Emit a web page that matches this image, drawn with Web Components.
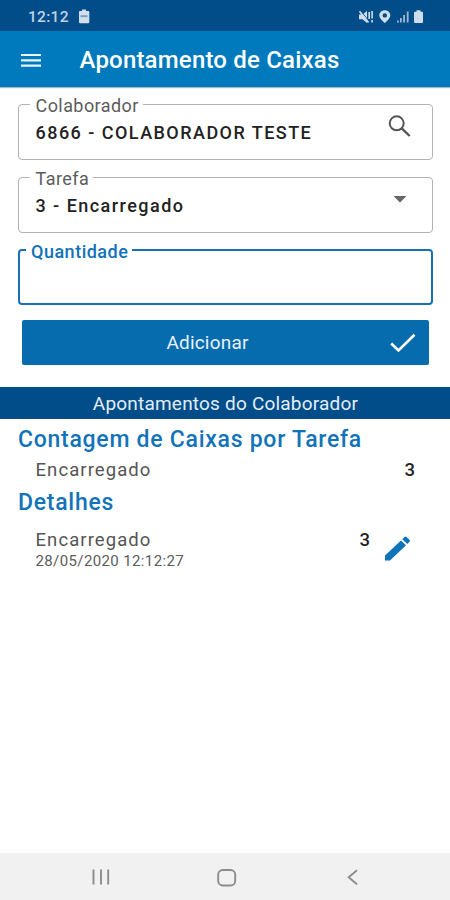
<!DOCTYPE html>
<html lang="pt-BR">
<head>
<meta charset="utf-8">
<title>Apontamento de Caixas</title>
<style>
html,body{margin:0;height:100%;background:#fff;font-family:Roboto,sans-serif}
</style>
</head>
<body>
<app-screen></app-screen>
<script>
const define=(name,html)=>customElements.define(name,class extends HTMLElement{
  constructor(){super();this.attachShadow({mode:'open'}).innerHTML=html;}
});

define('status-bar',`<style>
:host{display:flex;box-sizing:border-box;height:31px;padding:2px 26px 0 28px;background:#004d8a;align-items:center}
span{font-size:15.500px;font-weight:500;line-height:18px;letter-spacing:.3px;color:#bfd2e6}
svg{display:block;flex:none}.b{margin-left:9px}.r{margin-left:auto}
</style><span>12:12</span>
<svg class="b" width="12" height="15" viewBox="0 0 12 15"><path d="M4 .5h4V2h2.500q.8 0 .8.800V13q0 1.200-1.200 1.200H2.200Q1 14.200 1 13V2.800Q1 2 1.800 2H4z" fill="#d3dfed"/><path d="M2.500 6.200h7v2h-7z" fill="#7f9fc0"/></svg>
<svg class="r" width="66" height="16" viewBox="0 0 66 16" fill="#cfdcea"><path d="M1 5.500h3.500L9 2v12l-4.500-3.700H1z"/><path d="M2.800 1.800 11 12.500" stroke="#004d8a" stroke-width="1"/><path d="M1.500 2.200l9 11.300M11.200 3v7" stroke="#cfdcea" stroke-width="1.700" fill="none"/><path d="M14.100 2v7.500m0 1.500v2.500" stroke="#cfdcea" stroke-width="1.600"/><path fill-rule="evenodd" d="M26.800 1.200c-3 0-5.500 2.200-5.500 5.200 0 3.200 5.500 7.600 5.500 7.600s5.500-4.400 5.500-7.600c0-3-2.500-5.200-5.500-5.200zm0 3a2.200 2.200 0 1 1 0 4.400 2.200 2.200 0 0 1 0-4.400z"/><path opacity=".75" d="M39 11.500h1.800v2H39zM42 9h1.800v4.500H42zM45.200 6H47v7.500h-1.800zM48.800 2.500h1.800v11h-1.800z"/><path d="M58.500 1.200h4v1.600h1.500q1 0 1 1v9q0 1.300-1 1.300h-7q-1 0-1-1.300v-9q0-1 1-1h1.500z"/></svg>`);

define('app-bar',`<style>
:host{display:flex;box-sizing:border-box;height:56px;padding:3px 0 0 21px;align-items:center;background:#007abc;color:#fff;box-shadow:0 1px 1px #9cb9cf}
h1{margin:0 0 2px 38.500px;font-size:24px;line-height:28px;font-weight:500;white-space:nowrap;letter-spacing:.19px}
svg{display:block}
</style><svg width="20" height="14" viewBox="0 0 20 14"><path d="M0 1h20M0 6.300h20M0 11.600h20" stroke="#e6f5ff" stroke-width="2.200"/></svg><h1><slot></slot></h1>`);

define('outlined-field',`<style>
:host{display:block;height:73px}
fieldset{box-sizing:border-box;margin:0;height:64.500px;min-width:0;padding:0 18px 0 11px;border:1.500px solid #b3b3b3;border-radius:4px}
legend{padding:0 4px 0 5.500px;font-size:18px;line-height:21px;height:18px;color:#5c5c5c;white-space:nowrap;letter-spacing:.43px}
div{display:flex;justify-content:space-between;height:38px;padding-left:5.500px}
b{font-size:18px;line-height:22px;font-weight:500;color:#222;padding-top:9px;white-space:nowrap;letter-spacing:1.460px}
::slotted(svg){margin:2px 3px 0 0}
:host([active]) fieldset{border:2px solid #1a6fb5;padding-left:6px;height:64px}
:host([active]) legend{padding-left:5px;color:#1273b8;font-weight:500;letter-spacing:.5px}
</style><fieldset><legend><slot name="label"></slot></legend><div><b><slot></slot></b><slot name="icon"></slot></div></fieldset>`);

define('action-button',`<style>
:host{display:flex;align-items:center;box-sizing:border-box;height:45px;background:#076cae;color:#e8f2fa;border-radius:2px;font-size:19px;line-height:22px;letter-spacing:.2px}
span{flex:1;text-align:center;white-space:nowrap;padding:1px 0 0 3px}svg{margin-right:13px;display:block}
</style><span><slot></slot></span><svg width="26" height="20" viewBox="0 0 26 20"><path d="M1.200 10.500 8.500 17.500 24.500 1.800" fill="none" stroke="#fff" stroke-width="2.600"/></svg>`);

define('section-bar',`<style>
:host{display:flex;justify-content:center;height:32px;background:#004d8a;color:#e4eef8;font-size:19px;line-height:34px;white-space:nowrap;letter-spacing:.2px}
span{padding-left:1px}
</style><span><slot></slot></span>`);

define('section-title',`<style>
:host{display:block;color:#1273b8;font-size:23px;line-height:28px;font-weight:500;white-space:nowrap;letter-spacing:.73px}
</style><span><slot></slot></span>`);

define('task-row',`<style>
:host{display:flex;justify-content:space-between;color:#555;font-size:18.500px;line-height:22px;white-space:nowrap;letter-spacing:1.080px}
.t{display:flex;flex-direction:column}.d{font-size:15px;line-height:20px;color:#5c5c5c;letter-spacing:.38px}
:host([compact]) .d{display:none}
.r{display:flex;letter-spacing:0}b{font-weight:500;color:#222}
::slotted(svg){margin:6px 4px 0 14px}
</style><div class="t"><span><slot></slot></span><span class="d"><slot name="date"></slot></span></div><div class="r"><b><slot name="count"></slot></b><slot name="icon"></slot></div>`);

define('nav-bar',`<style>
:host{display:flex;box-sizing:border-box;height:47px;padding:2px 92px 0 92px;background:#f1f1f1;align-items:center;justify-content:space-between}
svg{display:block}.h{margin-right:4px}
</style><svg width="18" height="17" viewBox="0 0 18 17"><path d="M1.500.500v15M9 .500v15M16.200.500v15" stroke="#8c8c8c" stroke-width="1.900"/></svg>
<svg class="h" width="20" height="18" viewBox="0 0 20 18"><rect x="1.200" y="1" width="17" height="15.500" rx="4.500" fill="none" stroke="#8c8c8c" stroke-width="1.900"/></svg>
<svg width="11" height="17" viewBox="0 0 11 17"><path d="M10 1.200 1.600 8.200 10 15.200" fill="none" stroke="#8c8c8c" stroke-width="1.800"/></svg>`);

define('app-screen',`<style>
:host{display:flex;flex-direction:column;height:900px;width:450px;overflow:hidden;background:#fff}
form,main{display:flex;flex-direction:column}
form{padding:8px 17px 0 18px}
action-button{margin:6px 4px 0}
section-bar{margin-top:22px}
main{padding:7px 35px 0 18px}
nav-bar{margin-top:auto}
task-row{padding-left:17.500px}
.one{margin:5px 0 8px}
.two{margin-top:12px}
svg{display:block;flex:none}
</style>
<status-bar></status-bar>
<app-bar>Apontamento de Caixas</app-bar>
<form>
<outlined-field><span slot="label">Colaborador</span>6866 - COLABORADOR TESTE<svg slot="icon" width="23" height="23" viewBox="0 0 23 23"><circle cx="8.700" cy="8.300" r="7" fill="none" stroke="#555" stroke-width="2"/><path d="m13.700 13.300 8 7.700" stroke="#555" stroke-width="2.400"/></svg></outlined-field>
<outlined-field><span slot="label">Tarefa</span>3 - Encarregado<svg slot="icon" width="23" height="23" viewBox="0 0 23 23"><path d="M5.500 8h13l-6.500 6.500z" fill="#666"/></svg></outlined-field>
<outlined-field active><span slot="label">Quantidade</span></outlined-field>
<action-button>Adicionar</action-button>
</form>
<section-bar>Apontamentos do Colaborador</section-bar>
<main>
<section-title>Contagem de Caixas por Tarefa</section-title>
<task-row class="one" compact>Encarregado<span slot="count">3</span></task-row>
<section-title>Detalhes</section-title>
<task-row class="two">Encarregado<span slot="date">28/05/2020 12:12:27</span><span slot="count">3</span><svg slot="icon" width="27" height="27" viewBox="0 0 27 27"><path fill="#0d74ba" d="M1 20.500 17 5.500l5 4.700L6 25.500H1zM18.300 4.300 20.500 2q1-1 2 0l3 2.800q.900.900 0 1.900L23.300 9z"/></svg></task-row>
</main>
<nav-bar></nav-bar>`);
</script>
</body>
</html>
